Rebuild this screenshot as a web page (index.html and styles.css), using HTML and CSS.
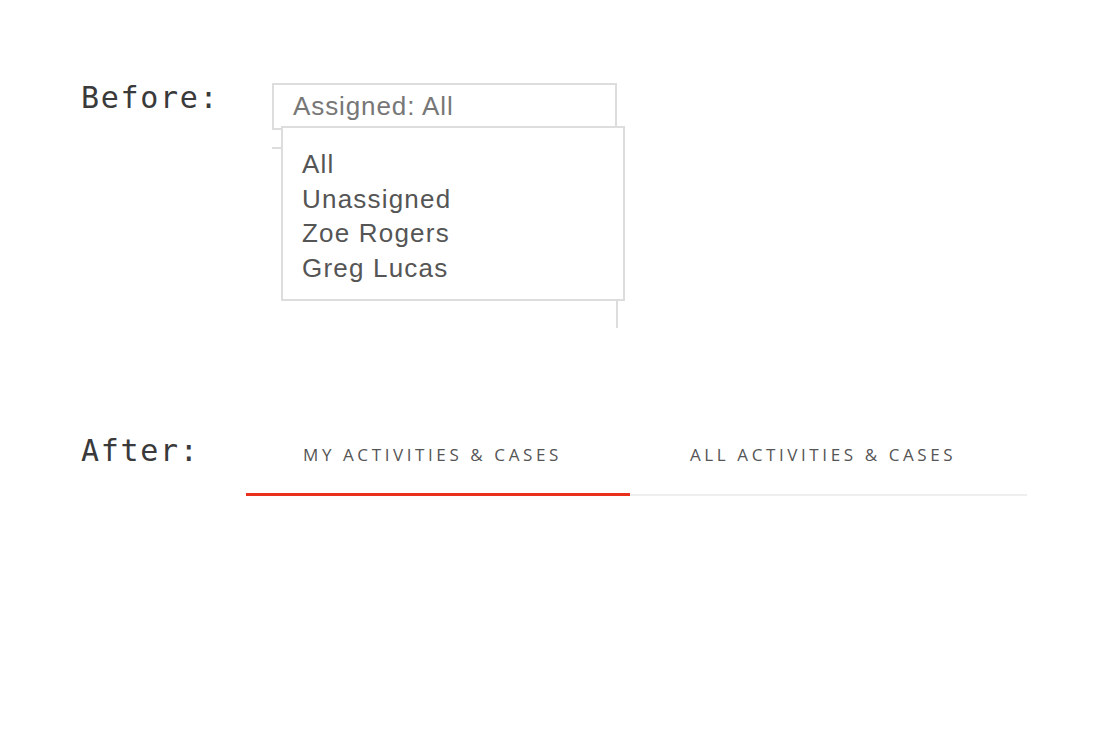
FILE: index.html
```html
<!DOCTYPE html>
<html>
<head>
<meta charset="utf-8">
<link rel="stylesheet" href="styles.css">
</head>
<body>
<div class="page">
  <section class="row before">
    <div class="label">Before:</div>
    <div class="select-wrap">
      <div class="select">Assigned: All</div>
      <div class="ghost-tick"></div>
      <div class="ghost-edge"></div>
      <ul class="menu">
        <li>All</li>
        <li>Unassigned</li>
        <li>Zoe Rogers</li>
        <li>Greg Lucas</li>
      </ul>
    </div>
  </section>
  <section class="row after">
    <div class="label">After:</div>
    <div class="tabs">
      <div class="tab active">MY ACTIVITIES &amp; CASES</div>
      <div class="tab">ALL ACTIVITIES &amp; CASES</div>
    </div>
  </section>
</div>
</body>
</html>
```
FILE: styles.css
```css
* { box-sizing: border-box; }
html, body { margin: 0; padding: 0; background: #fff; }
.page { width: 1106px; height: 730px; padding: 80px 0 0 81px; }
.row { display: flex; }
.label {
  flex: none;
  width: 136px;
  white-space: nowrap;
  font-family: "DejaVu Sans Mono", monospace;
  font-size: 30px;
  letter-spacing: 1.7px;
  color: #3a3a3a;
  line-height: 36px;
}
.select-wrap { position: relative; margin-left: 55px; margin-top: 3px; width: 353px; height: 245px; }
.select {
  width: 345px; height: 47px;
  border: 2px solid #ddd;
  font-family: "Liberation Sans", Arial, sans-serif;
  font-size: 26px;
  letter-spacing: 0.9px;
  color: #777;
  padding: 6px 0 0 19px;
  line-height: 30px;
}
.ghost-tick { position: absolute; left: 0; top: 64px; width: 10px; height: 2px; background: #ddd; }
.ghost-edge { position: absolute; left: 344px; top: 200px; width: 2px; height: 45px; background: #ddd; }
.menu {
  position: absolute; left: 9px; top: 43px;
  width: 344px; height: 175px;
  margin: 0; padding: 19px 0 0 19px;
  list-style: none;
  background: #fff;
  border: 2px solid #ddd;
  font-family: "Liberation Sans", Arial, sans-serif;
  font-size: 26px;
  letter-spacing: 1.2px;
  line-height: 34.5px;
  color: #555;
}
.after { margin-top: 105px; }
.tabs { display: flex; margin-left: 29px; width: 781px; border-bottom: 2px solid #eee; height: 63px; }
.tab {
  font-family: "Open Sans", sans-serif;
  font-size: 17px;
  letter-spacing: 3.6px;
  color: #555;
  padding: 10px 0 0 57px;
  line-height: 24px;
  white-space: nowrap;
}
.tab.active { width: 384px; border-bottom: 3px solid #e8301c; margin-bottom: -2px; }
.tab + .tab { padding-left: 60px; }
```
